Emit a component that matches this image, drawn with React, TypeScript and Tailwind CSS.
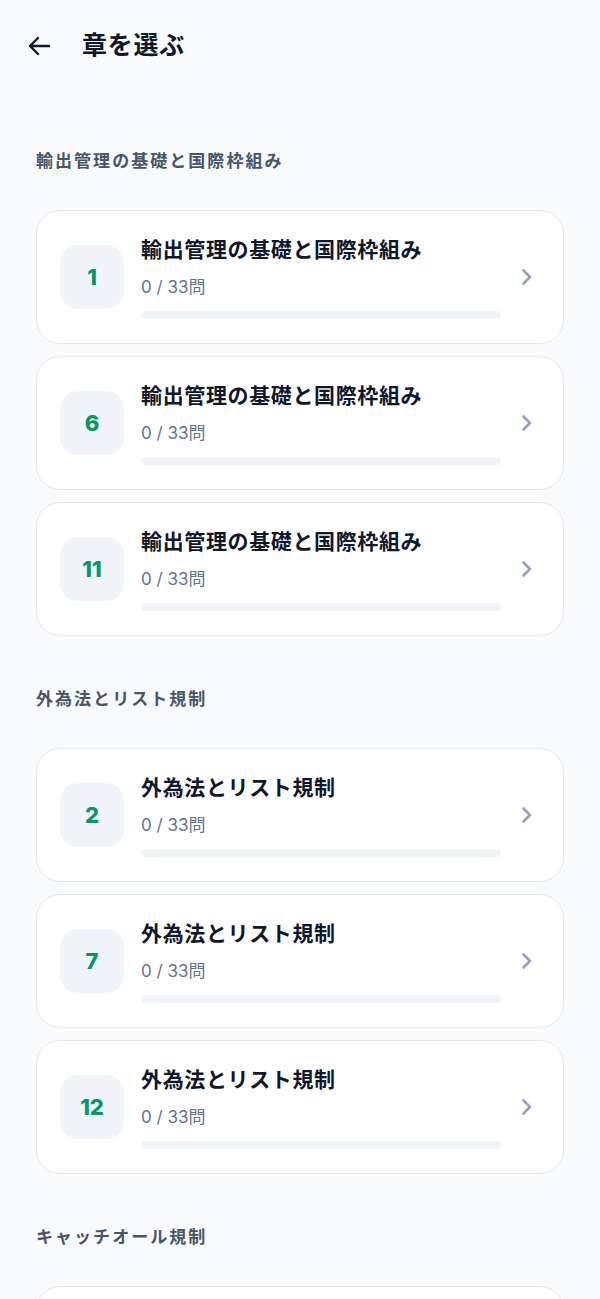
import React from "react";

type Chapter = { num: number; title: string; done: number; total: number };
type Section = { title: string; chapters: Chapter[] };

const sections: Section[] = [
  {
    title: "輸出管理の基礎と国際枠組み",
    chapters: [1, 6, 11].map((n) => ({ num: n, title: "輸出管理の基礎と国際枠組み", done: 0, total: 33 })),
  },
  {
    title: "外為法とリスト規制",
    chapters: [2, 7, 12].map((n) => ({ num: n, title: "外為法とリスト規制", done: 0, total: 33 })),
  },
  {
    title: "キャッチオール規制",
    chapters: [3, 8, 13].map((n) => ({ num: n, title: "キャッチオール規制", done: 0, total: 33 })),
  },
];

const font = { fontFamily: 'Inter, "Noto Sans CJK JP", sans-serif' };

function Chevron() {
  return (
    <svg width="12" height="18" viewBox="0 0 12 18" fill="none" className="shrink-0">
      <path d="M2.5 2.5 L9 9 L2.5 15.5" stroke="#94a3b8" strokeWidth="2.6" strokeLinecap="round" strokeLinejoin="round" />
    </svg>
  );
}

function Card({ c }: { c: Chapter }) {
  return (
    <div className="flex h-[134px] items-center rounded-[24px] border border-[#e5e7eb] bg-white pl-[23px] pr-[30px]">
      <div className="flex h-16 w-16 shrink-0 items-center justify-center rounded-[18px] bg-[#f1f5f9]">
        <span className="text-[22px] font-extrabold text-[#059669]">{c.num}</span>
      </div>
      <div className="ml-[17px] flex min-w-0 flex-1 flex-col">
        <div className="text-[21px] font-bold leading-7 tracking-[0.03em] text-[#0f172a]">{c.title}</div>
        <div className="mt-[11px] text-[17px] leading-6 text-[#64748b]">
          {c.done} / {c.total}問
        </div>
        <div className="mt-3 h-2 w-full rounded-full bg-[#f1f5f9]">
          <div className="h-2 rounded-full bg-[#059669]" style={{ width: `${(c.done / c.total) * 100}%` }} />
        </div>
      </div>
      <div className="ml-5">
        <Chevron />
      </div>
    </div>
  );
}

export default function App() {
  return (
    <div className="min-h-[1299px] bg-[#f8fafc]" style={font}>
      <header className="flex h-[92px] items-center pl-[27px]">
        <svg width="24" height="22" viewBox="0 0 24 22" fill="none">
          <path d="M22 11 H3 M11 3 L3 11 L11 19" stroke="#0f172a" strokeWidth="2.4" strokeLinecap="round" strokeLinejoin="round" />
        </svg>
        <h1 className="ml-[31px] text-[25px] font-bold tracking-[0.03em] text-[#0f172a]">章を選ぶ</h1>
      </header>
      <main className="flex flex-col gap-[51px] px-9 pt-[57px] pb-10">
        {sections.map((s) => (
          <section key={s.title}>
            <h2 className="mb-[37px] text-[17px] font-bold leading-6 tracking-[0.12em] text-[#475569]">{s.title}</h2>
            <div className="flex flex-col gap-3">
              {s.chapters.map((c) => (
                <Card key={c.num} c={c} />
              ))}
            </div>
          </section>
        ))}
      </main>
    </div>
  );
}
